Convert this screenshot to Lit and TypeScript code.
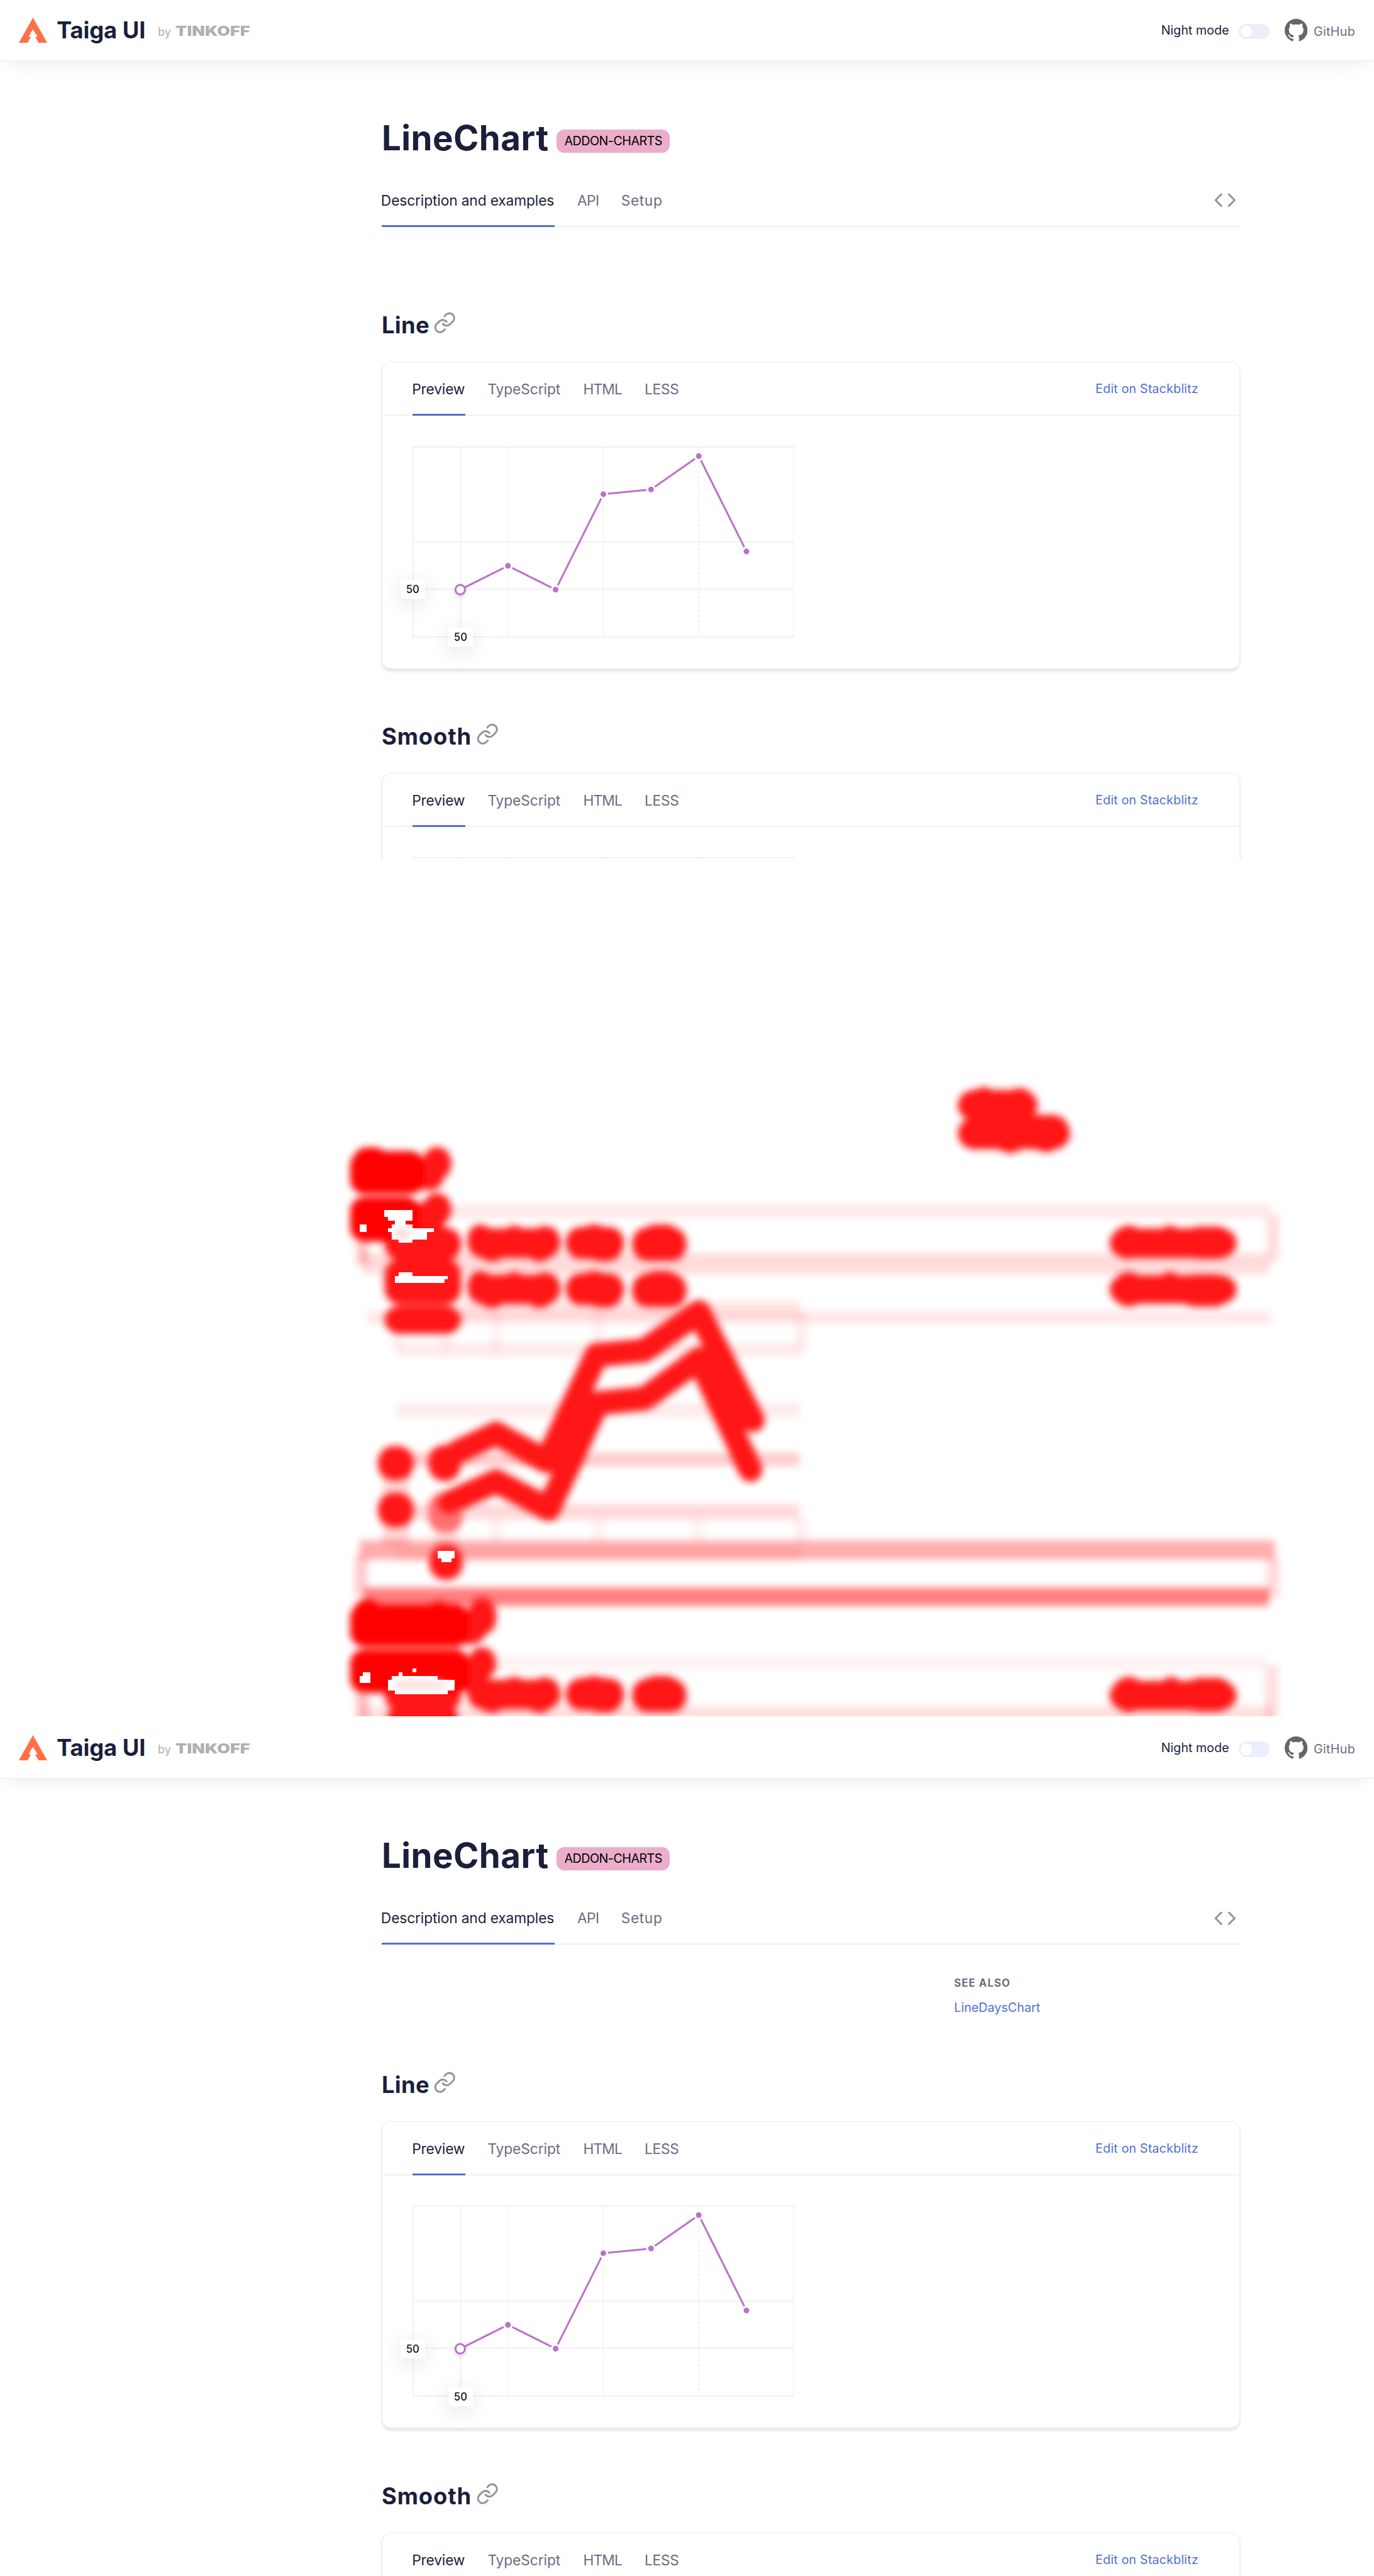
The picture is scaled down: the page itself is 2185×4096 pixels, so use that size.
import { LitElement, html, css, svg, nothing } from 'lit';
import { customElement, property } from 'lit/decorators.js';
import { classMap } from 'lit/directives/class-map.js';

type Tab = { label: string; key: string };

const PAGE_TABS: Tab[] = [
  { label: 'Description and examples', key: 'description' },
  { label: 'API', key: 'api' },
  { label: 'Setup', key: 'setup' },
];

const EXAMPLE_TABS: Tab[] = [
  { label: 'Preview', key: 'preview' },
  { label: 'TypeScript', key: 'typescript' },
  { label: 'HTML', key: 'html' },
  { label: 'LESS', key: 'less' },
];

const POINTS: [number, number][] = [
  [50, 50],
  [100, 75],
  [150, 50],
  [200, 150],
  [250, 155],
  [300, 190],
  [350, 90],
];

/* ---------- line chart ---------- */
@customElement('line-chart')
class LineChart extends LitElement {
  @property({ type: Boolean }) empty = false;

  static styles = css`
    :host {
      display: block;
      position: relative;
      width: 400px;
      height: 200px;
    }
    svg {
      display: block;
      overflow: visible;
    }
    .grid {
      stroke: #ededed;
      fill: none;
      stroke-width: 1;
    }
    .dash {
      stroke-dasharray: 3 2;
    }
    .series {
      stroke: #bc71c9;
      stroke-width: 2;
      fill: none;
      stroke-linejoin: round;
    }
    .dot {
      fill: #bc71c9;
      stroke: #fff;
      stroke-width: 2;
    }
    .active {
      fill: #fff;
      stroke: #bc71c9;
      stroke-width: 2;
      filter: drop-shadow(0 2px 2px rgba(0, 0, 0, 0.14));
    }
    .hint {
      position: absolute;
      width: 25.7px;
      height: 20px;
      line-height: 20.6px;
      text-align: center;
      font-size: 11px;
      font-weight: 500;
      color: #111;
      background: #fff;
      box-shadow: 0 4px 24px rgba(0, 0, 0, 0.12);
    }
    .hint-y {
      left: -13px;
      top: 140px;
    }
    .hint-x {
      left: 37.2px;
      top: 190px;
    }
  `;

  render() {
    const xy = POINTS.map(([x, v]) => [x, 200 - v]);
    return html`
      <svg width="400" height="200" viewBox="0 0 400 200">
        <path class="grid" d="M.5 .5V199.5M50.4 .5V199.5M0 .5H400M0 100H400M0 149.6H400M0 199.5H400" />
        <path class="grid dash" d="M100.2 1V199M199.9 1V199M300 1V199M399.5 1V199" />
        ${this.empty
          ? nothing
          : svg`
              <polyline class="series" points=${xy.map((p) => p.join(',')).join(' ')} />
              ${xy.slice(1).map(([x, y]) => svg`<circle class="dot" cx=${x} cy=${y} r="4" />`)}
              <circle class="active" cx="50" cy="150" r="5" />
            `}
      </svg>
      ${this.empty
        ? nothing
        : html`<div class="hint hint-y">50</div>
            <div class="hint hint-x">50</div>`}
    `;
  }
}

/* ---------- example section ---------- */
@customElement('doc-example')
class DocExample extends LitElement {
  @property() heading = '';
  @property({ type: Boolean }) empty = false;

  static styles = css`
    :host {
      display: block;
    }
    .title {
      display: flex;
      align-items: center;
      gap: 4.3px;
      height: 32px;
      margin: 0 0 21.9px;
      font-size: 24px;
      line-height: 32px;
      font-weight: 700;
      letter-spacing: 0.2px;
    }
    .title.wide {
      letter-spacing: 0.6px;
    }
    .title svg {
      margin-bottom: 6px;
    }
    .icon {
      fill: none;
      stroke: #959595;
      stroke-width: 2;
      stroke-linecap: round;
      stroke-linejoin: round;
    }
    .card {
      box-sizing: border-box;
      width: 900px;
      height: 322px;
      border: 1px solid #ebebeb;
      border-radius: 10px;
      box-shadow: 0 2px 3px rgba(0, 0, 0, 0.1);
      background: #fff;
    }
    .bar {
      box-sizing: border-box;
      display: flex;
      align-items: stretch;
      justify-content: space-between;
      height: 56px;
      padding: 0 43.3px 0 32px;
      box-shadow: inset 0 -1px #ededed;
      line-height: 56.4px;
    }
    .tabs {
      display: flex;
      gap: 24px;
      font-size: 15px;
      color: #6b6d80;
    }
    .tab {
      white-space: nowrap;
      box-sizing: border-box;
    }
    .tab.active {
      color: #1b1f3b;
      box-shadow: inset 0 -2px #526ed3;
    }
    .preview {
      width: 55px;
      text-indent: -0.8px;
      letter-spacing: -0.12px;
    }
    .typescript {
      width: 76px;
      text-indent: -0.6px;
      letter-spacing: -0.06px;
    }
    .html {
      width: 40px;
      text-indent: -0.3px;
      letter-spacing: -0.6px;
    }
    .less {
      width: 36px;
      text-indent: -0.1px;
      letter-spacing: -0.2px;
    }
    .edit {
      width: 108px;
      font-size: 13px;
      letter-spacing: 0.1px;
      color: #526ed3;
      white-space: nowrap;
    }
    .body {
      padding: 32px;
    }
  `;

  render() {
    return html`
      <h2 class=${classMap({ title: true, wide: this.heading.length > 4 })}>
        ${this.heading}
        <svg class="icon" width="24" height="24" viewBox="0 0 24 24">
          <path d="M10 13a5 5 0 0 0 7.54.54l3-3a5 5 0 0 0-7.07-7.07l-1.72 1.71" />
          <path d="M14 11a5 5 0 0 0-7.54-.54l-3 3a5 5 0 0 0 7.07 7.07l1.71-1.71" />
        </svg>
      </h2>
      <section class="card">
        <div class="bar">
          <div class="tabs">
            ${EXAMPLE_TABS.map(
              (t, i) => html`<div class=${classMap({ tab: true, active: i === 0, [t.key]: true })}>${t.label}</div>`
            )}
          </div>
          <div class="edit">Edit on Stackblitz</div>
        </div>
        <div class="body"><line-chart ?empty=${this.empty}></line-chart></div>
      </section>
    `;
  }
}

/* ---------- documentation page ---------- */
@customElement('doc-page')
class DocPage extends LitElement {
  @property({ type: Boolean }) related = false;

  static styles = css`
    :host {
      display: block;
      height: 900px;
      overflow: hidden;
      background: #fff;
    }
    .header {
      box-sizing: border-box;
      display: flex;
      align-items: center;
      justify-content: space-between;
      height: 64px;
      padding: 0 20px;
      border-bottom: 1px solid #ebebeb;
      box-shadow: 0 10px 20px -10px rgba(0, 0, 0, 0.11);
    }
    .brand,
    .tools {
      display: flex;
      align-items: center;
      white-space: nowrap;
    }
    .brand svg {
      display: block;
      margin-right: 9.3px;
    }
    .name {
      width: 106.2px;
      font-size: 24px;
      font-weight: 700;
      letter-spacing: -0.08px;
    }
    .by {
      width: 18.1px;
      margin-top: 2px;
      font-size: 12px;
      color: #b0b0b0;
    }
    .company {
      margin-top: 2px;
      font-size: 13.8px;
      font-weight: 900;
      color: #b0b0b0;
      transform: scaleX(1.285);
      transform-origin: 0 50%;
    }
    .night {
      width: 81.6px;
      font-size: 13px;
    }
    .toggle {
      box-sizing: border-box;
      width: 32px;
      height: 16px;
      margin: 3px 16px 0 0;
      padding: 2px;
      border-radius: 8px;
      background: #ebeefe;
    }
    .thumb {
      width: 12px;
      height: 12px;
      border-radius: 50%;
      background: #fff;
    }
    .tools svg {
      display: block;
      margin-right: 6.2px;
    }
    .github {
      width: 43.3px;
      margin-top: 2px;
      font-size: 13px;
      letter-spacing: 0.2px;
      color: #6b6d80;
    }
    .main {
      width: 900px;
      margin-left: 400px;
      padding-top: 56.4px;
    }
    .heading {
      display: flex;
      align-items: flex-start;
      height: 48px;
      margin-bottom: 13.6px;
    }
    .title {
      width: 183.5px;
      margin: 0;
      font-size: 36px;
      line-height: 48px;
      font-weight: 700;
      letter-spacing: 0.3px;
    }
    .badge {
      width: 118.5px;
      height: 24px;
      margin-top: 15.6px;
      border-radius: 8px;
      background: #eaaecb;
      color: #000;
      font-size: 13px;
      line-height: 24.8px;
      letter-spacing: -0.35px;
      text-align: center;
    }
    .bar {
      box-sizing: border-box;
      display: flex;
      align-items: center;
      justify-content: space-between;
      height: 56px;
      padding-right: 4px;
      box-shadow: inset 0 -1px #ededed;
    }
    .tabs {
      display: flex;
      gap: 24px;
      height: 56px;
      font-size: 15px;
      line-height: 56.4px;
      color: #6b6d80;
    }
    .tab {
      white-space: nowrap;
    }
    .tab.active {
      color: #1b1f3b;
      box-shadow: inset 0 -2px #526ed3;
    }
    .description {
      width: 181px;
      text-indent: -0.7px;
      letter-spacing: -0.09px;
    }
    .api {
      width: 22px;
      letter-spacing: -0.4px;
    }
    .setup {
      width: 42px;
      letter-spacing: 0.4px;
    }
    .code {
      display: block;
      fill: none;
      stroke: #959595;
      stroke-width: 2;
      stroke-linecap: round;
      stroke-linejoin: round;
    }
    .intro {
      box-sizing: border-box;
      height: 87.1px;
      padding: 32px 0 0 600px;
    }
    .intro.tall {
      height: 131.1px;
    }
    .see {
      margin-bottom: 8px;
      font-size: 11px;
      line-height: 16px;
      font-weight: 700;
      letter-spacing: 0.73px;
      color: #6b6d80;
    }
    .link {
      font-size: 13px;
      line-height: 20px;
      color: #526ed3;
    }
    .examples {
      display: flex;
      flex-direction: column;
      gap: 55.1px;
    }
  `;

  render() {
    return html`
      <header class="header">
        <div class="brand">
          <svg width="30" height="27" viewBox="0 0 30 27">
            <path
              fill="#ff7043"
              d="M14.8 0 0 26.4H9.1L12.7 20.2H10.2L11.9 17.6H13 L11.6 17.2 14.8 12.4 18.2 17.6 19.7 20.2H17.1L20.6 26.4H29.7Z"
            />
          </svg>
          <span class="name">Taiga UI</span>
          <span class="by">by</span>
          <span class="company">TINKOFF</span>
        </div>
        <div class="tools">
          <span class="night">Night mode</span>
          <div class="toggle"><div class="thumb"></div></div>
          <svg width="24" height="24" viewBox="0 0 16 16">
            <path
              fill="#666"
              d="M8 0C3.58 0 0 3.58 0 8c0 3.54 2.29 6.53 5.47 7.59.4.07.55-.17.55-.38 0-.19-.01-.82-.01-1.49-2.01.37-2.53-.49-2.69-.94-.09-.23-.48-.94-.82-1.13-.28-.15-.68-.52-.01-.53.63-.01 1.08.58 1.23.82.72 1.21 1.87.87 2.33.66.07-.52.28-.87.51-1.07-1.78-.2-3.64-.89-3.64-3.95 0-.87.31-1.59.82-2.15-.08-.2-.36-1.02.08-2.12 0 0 .67-.21 2.2.82.64-.18 1.32-.27 2-.27s1.36.09 2 .27c1.53-1.04 2.2-.82 2.2-.82.44 1.1.16 1.92.08 2.12.51.56.82 1.27.82 2.15 0 3.07-1.87 3.75-3.65 3.95.29.25.54.73.54 1.48 0 1.07-.01 1.93-.01 2.2 0 .21.15.46.55.38A8.01 8.01 0 0 0 16 8c0-4.42-3.58-8-8-8z"
            />
          </svg>
          <span class="github">GitHub</span>
        </div>
      </header>
      <main class="main">
        <div class="heading">
          <h1 class="title">LineChart</h1>
          <span class="badge">ADDON-CHARTS</span>
        </div>
        <nav class="bar">
          <div class="tabs">
            ${PAGE_TABS.map(
              (t, i) => html`<div class=${classMap({ tab: true, active: i === 0, [t.key]: true })}>${t.label}</div>`
            )}
          </div>
          <svg class="code" width="24" height="24" viewBox="0 0 24 24">
            <path d="M16 18l6-6-6-6M8 6l-6 6 6 6" />
          </svg>
        </nav>
        <div class=${classMap({ intro: true, tall: this.related })}>
          ${this.related
            ? html`<div class="see">SEE ALSO</div>
                <div class="link">LineDaysChart</div>`
            : nothing}
        </div>
        <div class="examples">
          <doc-example heading="Line"></doc-example>
          <doc-example heading="Smooth" empty></doc-example>
        </div>
      </main>
    `;
  }
}

/* ---------- heat map of changed regions ---------- */
type Box = [number, number, number, number];

// Glyph clusters: x, y, right, bottom.
const SPOTS: Box[] = [
  [2008, 484, 2175, 548], [2035, 478, 2090, 530], [2110, 480, 2165, 530],
  [2008, 542, 2243, 608], [2130, 536, 2240, 600], [2085, 560, 2150, 616],
  [2160, 560, 2225, 614],
  [2326, 774, 2592, 836], [2332, 768, 2400, 838], [2425, 768, 2480, 830], [2480, 770, 2585, 838],
  [2326, 872, 2592, 932], [2332, 865, 2400, 938], [2425, 865, 2480, 930], [2470, 870, 2580, 938],
  [2326, 1722, 2592, 1784], [2332, 1714, 2400, 1788], [2430, 1714, 2480, 1780], [2480, 1716, 2585, 1787],
  [806, 772, 967, 842], [806, 838, 967, 934], [806, 936, 967, 995],
  [806, 1676, 967, 1786], [812, 1770, 960, 1830],
  [886, 603, 946, 672], [868, 640, 930, 694],
  [886, 700, 946, 768], [850, 720, 930, 800],
  [981, 1548, 1040, 1626], [950, 1580, 1020, 1646],
  [981, 1652, 1040, 1720], [950, 1680, 1010, 1745],
  [792, 1230, 867, 1302], [792, 1328, 867, 1400],
  [898, 1228, 966, 1304], [900, 1437, 970, 1511],
];

// Labels of one tab row, relative to the row's top.
const ROW: Box[] = [
  [980, 8, 1175, 70], [980, 0, 1034, 60], [1050, 2, 1106, 60], [1110, 3, 1174, 62],
  [1000, 20, 1062, 78], [1102, 20, 1160, 78],
  [1186, 5, 1308, 72], [1212, 0, 1278, 60], [1225, 14, 1305, 77],
  [1325, 6, 1439, 76], [1342, 0, 1428, 60],
];

const ROW_TOPS = [766, 863, 1712];

const CORES: Box[] = [
  [734, 612, 890, 702], [742, 604, 812, 650],
  [734, 708, 880, 802],
  [734, 1560, 984, 1651], [742, 1551, 800, 1600], [890, 1555, 950, 1600],
  [734, 1656, 984, 1748],
];

// Thin rules: x1, y1, x2, y2, width, opacity.
const RULES: [number, number, number, number, number, number][] = [
  [940, 738, 2662, 738, 28, 0.09],
  [2668, 745, 2668, 845, 26, 0.13],
  [760, 848, 2660, 848, 44, 0.14],
  [760, 800, 760, 850, 24, 0.25],
  [770, 961, 2664, 961, 28, 0.09],
  [960, 945, 1675, 945, 36, 0.1],
  [833, 1029, 1680, 1029, 30, 0.08],
  [833, 960, 833, 1030, 24, 0.06],
  [935, 960, 935, 1030, 24, 0.06],
  [1040, 950, 1040, 1030, 24, 0.05],
  [1254, 950, 1254, 1030, 24, 0.05],
  [1679, 950, 1679, 1030, 24, 0.07],
  [833, 1155, 1678, 1155, 30, 0.08],
  [830, 1258, 1676, 1258, 28, 0.2],
  [830, 1368, 1676, 1368, 32, 0.15],
  [830, 1260, 830, 1440, 56, 0.16],
  [935, 1380, 935, 1450, 50, 0.12],
  [1040, 1380, 1040, 1430, 26, 0.05],
  [1254, 1380, 1254, 1430, 26, 0.05],
  [1464, 1380, 1464, 1430, 26, 0.05],
  [1679, 1380, 1679, 1430, 26, 0.06],
  [754, 1448, 2672, 1448, 40, 0.32],
  [830, 1457, 1678, 1457, 30, 0.07],
  [764, 1546, 2660, 1546, 38, 0.5],
  [757, 1460, 757, 1545, 28, 0.2],
  [2668, 1462, 2668, 1548, 28, 0.14],
  [1040, 1684, 2655, 1684, 32, 0.045],
  [2666, 1690, 2666, 1820, 28, 0.12],
  [760, 1745, 760, 1820, 26, 0.25],
  [760, 1792, 2668, 1792, 34, 0.12],
];

// Hard-edged saturated cells inside the clusters.
const HOLES: Box[] = [
  [806, 735, 865, 750], [813, 750, 865, 758], [828, 758, 850, 766],
  [821, 766, 865, 774], [813, 774, 910, 781], [821, 781, 895, 797], [836, 797, 865, 804],
  [754, 766, 769, 781],
  [836, 866, 865, 874], [828, 874, 939, 881], [828, 881, 932, 889],
  [917, 1450, 953, 1466], [925, 1466, 946, 1474],
  [761, 1704, 776, 1712], [754, 1712, 776, 1727],
  [865, 1697, 873, 1704], [836, 1704, 843, 1712],
  [821, 1712, 917, 1720], [813, 1720, 953, 1743], [828, 1743, 939, 1750],
];

@customElement('heat-map')
class HeatMap extends LitElement {
  static styles = css`
    :host {
      display: block;
      height: 900px;
      overflow: hidden;
    }
    svg {
      display: block;
      width: 1440px;
      height: 898.5px;
      background: #fff;
    }
    .rule {
      stroke: #f00;
      fill: none;
    }
    .spot {
      fill: #ff1616;
    }
    .core {
      fill: #ff0202;
    }
    .trace {
      fill: none;
      stroke: #ff1616;
      stroke-width: 50;
      stroke-linecap: round;
      stroke-linejoin: round;
    }
    .pale {
      fill: #ff7070;
    }
    .hole {
      fill: #fff;
      shape-rendering: crispEdges;
    }
    .tint {
      fill: #ffd8d8;
    }
  `;

  render() {
    const box = (cls: string, rx: number) => ([x, y, r, b]: Box) =>
      svg`<rect class=${cls} x=${x} y=${y} width=${r - x} height=${b - y} rx=${rx} />`;
    const rows = ROW_TOPS.flatMap((top) => ROW.map(([x, y, r, b]): Box => [x, top + y, r, top + b]));
    return html`
      <svg viewBox="0 0 2880 1797">
        <defs>
          <filter id="soft" filterUnits="userSpaceOnUse" x="0" y="0" width="2880" height="1900">
            <feGaussianBlur stdDeviation="8" />
          </filter>
          <filter id="edge" filterUnits="userSpaceOnUse" x="0" y="0" width="2880" height="1900">
            <feGaussianBlur stdDeviation="7.5" />
          </filter>
        </defs>
        <g filter="url(#soft)">
          ${RULES.map(
            ([x1, y1, x2, y2, w, o]) =>
              svg`<line class="rule" x1=${x1} y1=${y1} x2=${x2} y2=${y2} stroke-width=${w} stroke-opacity=${o} />`
          )}
        </g>
        <g filter="url(#edge)">
          <rect class="pale" x="898" y="1326" width="72" height="86" rx="34" />
          <polyline class="trace" points="960,1242 1040,1204 1146,1262 1250,1040 1350,1030 1465,950 1578,1176" />
          <polyline class="trace" points="940,1350 1040,1304 1150,1362 1252,1140 1352,1130 1465,1048 1573,1280" />
          ${SPOTS.map(box('spot', 34))} ${rows.map(box('spot', 32))} ${CORES.map(box('core', 30))}
        </g>
        ${HOLES.map(box('hole', 0))}
        <g filter="url(#edge)">
          <rect class="tint" x="828" y="776" width="30" height="18" />
          <rect class="tint" x="828" y="1724" width="104" height="14" />
        </g>
      </svg>
    `;
  }
}

@customElement('app-root')
class AppRoot extends LitElement {
  static styles = css`
    :host {
      display: block;
      height: 4096px;
      overflow: hidden;
      background: #fff;
    }
    .page {
      zoom: 1.5173;
      width: 1440px;
      font-family: Inter, 'Liberation Sans', sans-serif;
      color: #1b1f3b;
    }
  `;

  render() {
    return html`
      <div class="page">
        <doc-page></doc-page>
        <heat-map></heat-map>
        <doc-page related></doc-page>
      </div>
    `;
  }
}
